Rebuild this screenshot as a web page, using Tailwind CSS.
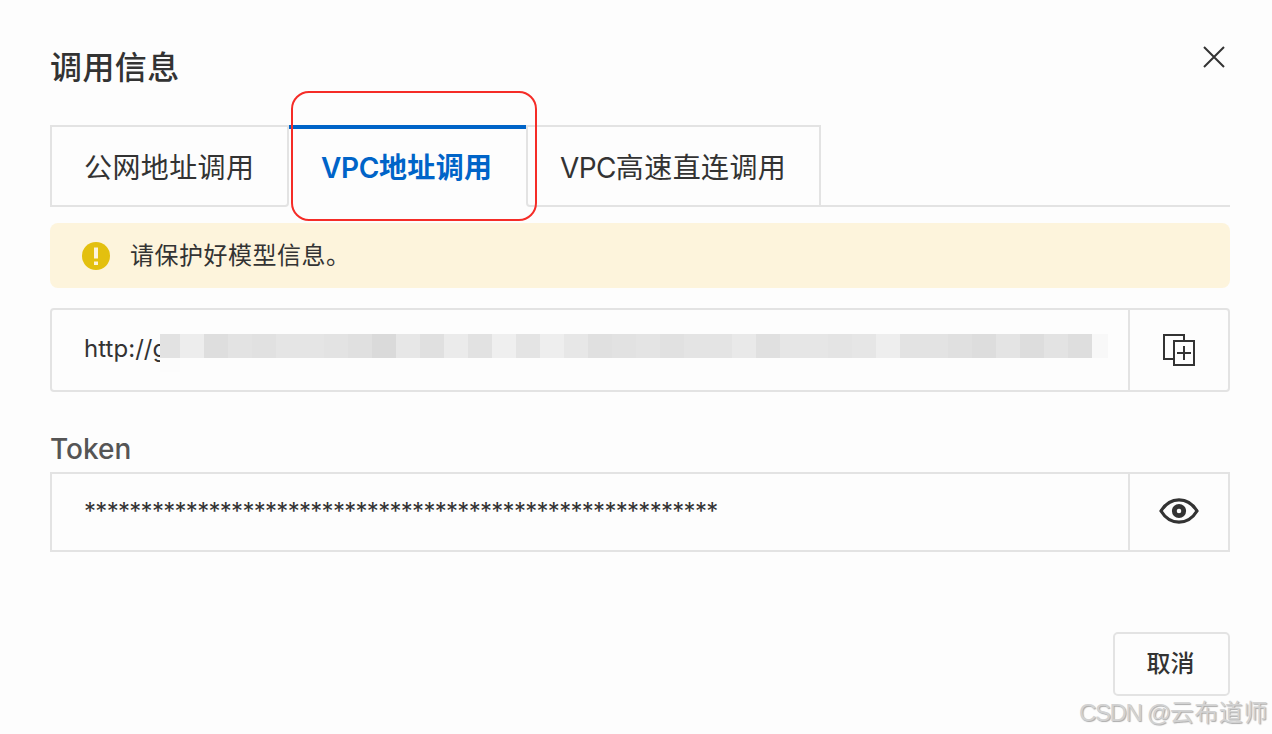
<!DOCTYPE html>
<html lang="zh-CN">
<head>
  <meta charset="UTF-8">
  <title>调用信息</title>
  <script src="https://cdn.jsdelivr.net/npm/@tailwindcss/browser@4"></script>
</head>
<body class="bg-[#fdfdfd] text-[#333] font-['Inter','Noto_Sans_CJK_SC',sans-serif]">
  <div class="relative w-[1272px] h-[734px] overflow-hidden pl-[50px] pr-[42px]">
    <!-- Header -->
    <div class="flex justify-between h-[125px]">
      <h2 class="mt-[44px] text-[32px] leading-[48px] tracking-[0.4px] font-medium">调用信息</h2>
      <button type="button" aria-label="关闭" class="mt-[45px] mr-1 size-6">
        <svg class="size-6" viewBox="0 0 24 24" fill="none" stroke="#333" stroke-width="2"><path d="M2 2L22 22M22 2L2 22"/></svg>
      </button>
    </div>

    <!-- Tabs -->
    <div class="flex h-[82px] text-[28px] leading-[40px]">
      <div class="w-[239px] border-2 border-[#e3e3e3] rounded-br-[4px] pl-[32px] pt-[21px] tracking-[0.4px] whitespace-nowrap">公网地址调用</div>
      <div class="w-[237px] border-t-4 border-[#0064c8] pl-[32px] pt-[19px] font-semibold text-[#0064c8] tracking-[0.4px] whitespace-nowrap"><span class="tracking-[-0.4px]">VPC</span>地址调用</div>
      <div class="w-[295px] border-2 border-[#e3e3e3] rounded-bl-[4px] pl-[32px] pt-[21px] tracking-[0.4px] whitespace-nowrap"><span class="tracking-[-0.6px]">VPC</span>高速直连调用</div>
      <div class="flex-1 border-b-2 border-[#e3e3e3]"></div>
    </div>

    <!-- Notice -->
    <div class="mt-4 h-[65px] flex items-center rounded-lg bg-[#fdf4dc] pl-8">
      <svg class="size-7 mt-[1px]" viewBox="0 0 28 28"><circle cx="14" cy="14" r="14" fill="#e3c00f"/><path d="M12 5.500h4v11h-4zM12 19.500h4v3.500h-4z" fill="#fdf4dc"/></svg>
      <span class="ml-[20px] text-2xl tracking-[0.5px]">请保护好模型信息。</span>
    </div>

    <!-- Address -->
    <div class="mt-5 h-[84px] flex border-2 border-[#e3e3e3] rounded-[4px]">
      <div class="flex-1 flex pl-[32px] pt-[24px]">
        <span class="w-[76px] -mt-[1px] whitespace-nowrap text-2xl tracking-[0.05px]">http://g</span>
        <div class="relative flex h-6">
          <i class="w-5 bg-[#e2e2e2]"></i>
          <i class="w-6 bg-[#ededed]"></i>
          <i class="w-6 bg-[#dedede]"></i>
          <i class="w-6 bg-[#e3e3e3]"></i>
          <i class="w-6 bg-[#e1e1e1]"></i>
          <i class="w-12 bg-[#e5e5e5]"></i>
          <i class="w-6 bg-[#e3e3e3]"></i>
          <i class="w-6 bg-[#e0e0e0]"></i>
          <i class="w-6 bg-[#dadada]"></i>
          <i class="w-6 bg-[#e7e7e7]"></i>
          <i class="w-6 bg-[#e0e0e0]"></i>
          <i class="w-6 bg-[#ebebeb]"></i>
          <i class="w-6 bg-[#e2e2e2]"></i>
          <i class="w-6 bg-[#efefef]"></i>
          <i class="w-6 bg-[#e4e4e4]"></i>
          <i class="w-6 bg-[#eeeeee]"></i>
          <i class="w-6 bg-[#e7e7e7]"></i>
          <i class="w-6 bg-[#e0e0e0]"></i>
          <i class="w-6 bg-[#e2e2e2]"></i>
          <i class="w-6 bg-[#e4e4e4]"></i>
          <i class="w-6 bg-[#e1e1e1]"></i>
          <i class="w-12 bg-[#e4e4e4]"></i>
          <i class="w-6 bg-[#e9e9e9]"></i>
          <i class="w-6 bg-[#e0e0e0]"></i>
          <i class="w-12 bg-[#e6e6e6]"></i>
          <i class="w-6 bg-[#e4e4e4]"></i>
          <i class="w-6 bg-[#e6e6e6]"></i>
          <i class="w-6 bg-[#eeeeee]"></i>
          <i class="w-12 bg-[#e3e3e3]"></i>
          <i class="w-6 bg-[#e0e0e0]"></i>
          <i class="w-6 bg-[#dddddd]"></i>
          <i class="w-6 bg-[#e4e4e4]"></i>
          <i class="w-6 bg-[#dddddd]"></i>
          <i class="w-6 bg-[#e3e3e3]"></i>
          <i class="w-6 bg-[#dedede]"></i>
          <i class="w-4 bg-[#f8f8f8]"></i>
          <!-- Fade under the first blocks -->
          <i class="absolute left-0 top-6 w-5 h-3.5 bg-[#fcfcfc]"></i>
        </div>
      </div>
      <button type="button" aria-label="复制" class="w-[100px] border-l-2 border-[#e3e3e3] flex items-center justify-center">
        <svg class="size-8" viewBox="0 0 32 32" fill="none" stroke="#333" stroke-width="2"><path d="M10 25H1V1h20v5M11 7h20v24H11zM14 19h14M21 12v14"/></svg>
      </button>
    </div>

    <!-- Token -->
    <label class="block mt-[37px] h-[43px] text-[28px] leading-[40px] font-medium text-[#555]">Token</label>
    <div class="h-[80px] flex border-2 border-[#e3e3e3]">
      <div class="flex-1 pl-[32px] pt-[22px] text-2xl tracking-[-0.71px]">********************************************************</div>
      <button type="button" aria-label="显示" class="w-[100px] border-l-2 border-[#e3e3e3] flex items-center justify-center">
        <svg class="w-10 h-[26px] -mt-[2px]" viewBox="0 0 40 26" fill="none" stroke="#333"><path d="M2 13C11-1.800 29-1.800 38 13C29 27.800 11 27.800 2 13Z" stroke-width="3.200"/><circle cx="20" cy="13" r="4.700" stroke-width="4.800"/></svg>
      </button>
    </div>

    <!-- Footer -->
    <div class="mt-20 flex justify-end">
      <button type="button" class="w-[117px] h-16 border-2 border-[#e3e3e3] rounded-[5px] pr-[2px] text-2xl font-medium">取消</button>
    </div>

    <!-- Highlight around the active tab -->
    <div class="absolute left-[291px] top-[91px] w-[246px] h-[130px] border-2 border-[#f52c27] rounded-[18px]"></div>
    <!-- Watermark -->
    <div class="absolute left-[1079px] top-[695px] text-2xl leading-[36px] whitespace-nowrap text-[#d2d2d2] font-['Liberation_Sans','Noto_Sans_CJK_SC',sans-serif] [text-shadow:1px_1px_1px_#aaa]"><span class="tracking-[-1.4px]">CSDN @</span><span class="tracking-[0.6px]">云布道师</span></div>
  </div>
</body>
</html>
